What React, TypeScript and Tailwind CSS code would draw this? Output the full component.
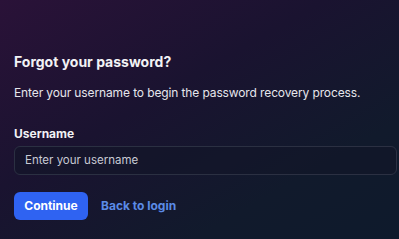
import React from 'react';

export default function App() {
  return (
    <div
      className="h-[239px] w-[399px] overflow-hidden bg-[linear-gradient(150deg,#2a1238_0%,#1a1330_40%,#111a2c_75%,#0e1a2c_100%)] px-[14px] pt-[52px] text-white"
      style={{ fontFamily: 'Inter, "Noto Sans", sans-serif' }}
    >
      <h1 className="text-[14px] font-bold leading-[20px] text-[#f2f2f5]">Forgot your password?</h1>
      <p className="mt-[13px] text-[12px] leading-[16px] tracking-[-0.01em] text-[#e6e6ec]">
        Enter your username to begin the password recovery process.
      </p>

      <label className="mt-[25px] block text-[12px] font-bold leading-[16px] text-[#f2f2f5]">
        Username
      </label>
      <div className="mt-[4px] flex h-[29px] w-[383px] items-center rounded-[6px] border border-[#2b3042] bg-[#121628]/60 px-[10px]">
        <span className="text-[11.5px] text-[#c8cad4]">Enter your username</span>
      </div>

      <div className="mt-[17px] flex items-center gap-[13px]">
        <button className="flex h-[28px] w-[74px] items-center justify-center rounded-[6px] bg-[#2f63f2] text-[12px] font-bold text-white">
          Continue
        </button>
        <span className="text-[12px] font-bold text-[#5b8be6]">Back to login</span>
      </div>
    </div>
  );
}
